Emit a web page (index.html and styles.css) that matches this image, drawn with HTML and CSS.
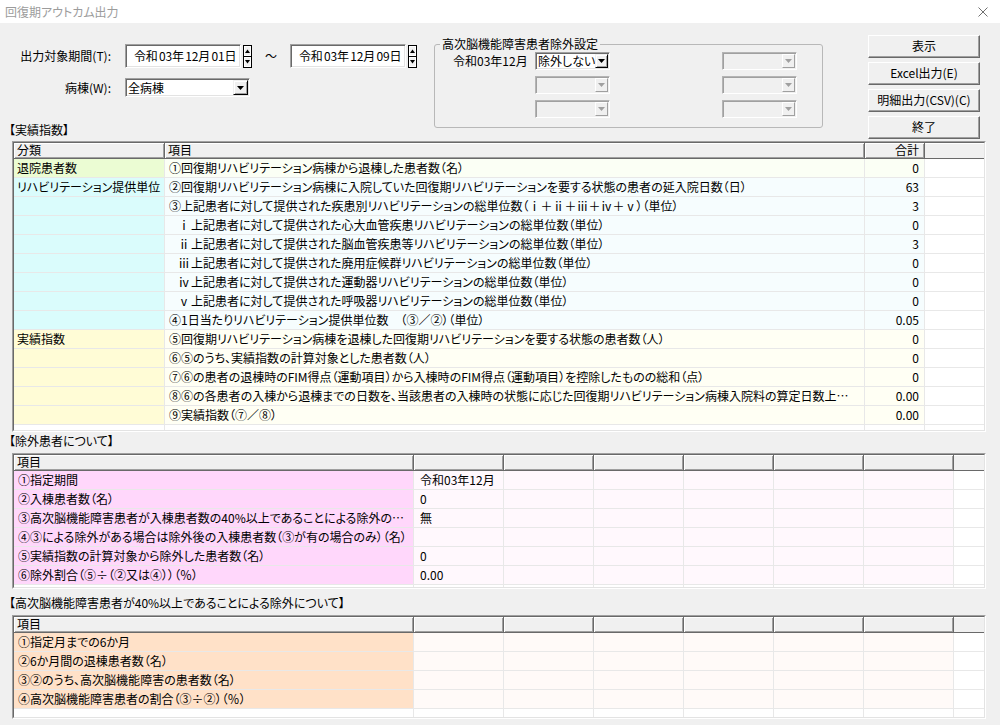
FILE: index.html
```html
<!DOCTYPE html>
<html lang="ja">
<head>
<meta charset="utf-8">
<title>回復期アウトカム出力</title>
<link rel="stylesheet" href="styles.css">
</head>
<body>
<div class="titlebar">
  <span class="title">回復期アウトカム出力</span>
  <svg class="close" width="10" height="10" viewBox="0 0 10 10"><path d="M0.5 0.5L9.5 9.5M9.5 0.5L0.5 9.5" stroke="#707070" stroke-width="1" fill="none"/></svg>
</div>

<div class="top">
  <div class="left">
    <div class="frow r1">
      <span class="lbl">出力対象期間(T):</span>
      <div class="date sunken">令和 03年 12月 01日</div>
      <svg class="spin" width="9" height="23" viewBox="0 0 9 23"><rect x="0.5" y="0.5" width="8" height="22" fill="#f0f0f0" stroke="#000"/><rect x="1.5" y="1.5" width="6" height="9" fill="none" stroke="#fff"/><rect x="1.5" y="12.5" width="6" height="9" fill="none" stroke="#fff"/><line x1="0" y1="11.5" x2="9" y2="11.5" stroke="#000"/><polygon points="2,8 7,8 4.5,4.5" fill="#000"/><polygon points="2,15 7,15 4.5,18.5" fill="#000"/></svg>
      <span class="tilde">～</span>
      <div class="date sunken">令和 03年 12月 09日</div>
      <svg class="spin" width="9" height="23" viewBox="0 0 9 23"><rect x="0.5" y="0.5" width="8" height="22" fill="#f0f0f0" stroke="#000"/><rect x="1.5" y="1.5" width="6" height="9" fill="none" stroke="#fff"/><rect x="1.5" y="12.5" width="6" height="9" fill="none" stroke="#fff"/><line x1="0" y1="11.5" x2="9" y2="11.5" stroke="#000"/><polygon points="2,8 7,8 4.5,4.5" fill="#000"/><polygon points="2,15 7,15 4.5,18.5" fill="#000"/></svg>
    </div>
    <div class="frow r2">
      <span class="lbl">病棟(W):</span>
      <div class="sel sunken ward"><span class="seltext">全病棟</span><span class="arrow"><svg width="7" height="4" viewBox="0 0 7 4"><polygon points="0,0 7,0 3.5,4" fill="#000"/></svg></span></div>
    </div>
  </div>

  <fieldset class="group">
    <legend>高次脳機能障害患者除外設定</legend>
    <div class="gb-grid">
      <span class="gb-lbl">令和03年12月</span>
      <div class="sel sunken small"><span class="seltext">除外しない</span><span class="arrow"><svg width="7" height="4" viewBox="0 0 7 4"><polygon points="0,0 7,0 3.5,4" fill="#000"/></svg></span></div>
      <span></span>
      <div class="sel sunken small dis"><span class="seltext"></span><span class="arrow"><svg width="7" height="4" viewBox="0 0 7 4"><polygon points="0,0 7,0 3.5,4" fill="#a0a0a0"/></svg></span></div>
      <span></span>
      <div class="sel sunken small dis"><span class="seltext"></span><span class="arrow"><svg width="7" height="4" viewBox="0 0 7 4"><polygon points="0,0 7,0 3.5,4" fill="#a0a0a0"/></svg></span></div>
      <span></span>
      <div class="sel sunken small dis"><span class="seltext"></span><span class="arrow"><svg width="7" height="4" viewBox="0 0 7 4"><polygon points="0,0 7,0 3.5,4" fill="#a0a0a0"/></svg></span></div>
      <span></span>
      <div class="sel sunken small dis"><span class="seltext"></span><span class="arrow"><svg width="7" height="4" viewBox="0 0 7 4"><polygon points="0,0 7,0 3.5,4" fill="#a0a0a0"/></svg></span></div>
      <span></span>
      <div class="sel sunken small dis"><span class="seltext"></span><span class="arrow"><svg width="7" height="4" viewBox="0 0 7 4"><polygon points="0,0 7,0 3.5,4" fill="#a0a0a0"/></svg></span></div>
    </div>
  </fieldset>

  <div class="btns">
    <div class="btn">表示</div>
    <div class="btn">Excel出力(E)</div>
    <div class="btn">明細出力(CSV)(C)</div>
    <div class="btn">終了</div>
  </div>
</div>

<div class="seclabel s1">【実績指数】</div>
<div class="grid g1">
  <div class="inner">
    <div class="row head">
      <div class="hc">分類</div><div class="hc">項目</div><div class="hc num">合計</div><div class="hc fill"></div>
    </div>
    <div class="row green">
      <div class="c cat">退院患者数</div><div class="c item">①回復期リハビリテーション病棟から退棟した患者数（名）</div><div class="c item num">0</div><div class="c blank"></div>
    </div>
    <div class="row cyan">
      <div class="c cat">リハビリテーション提供単位</div><div class="c item">②回復期リハビリテーション病棟に入院していた回復期リハビリテーションを要する状態の患者の延入院日数（日）</div><div class="c item num">63</div><div class="c blank"></div>
    </div>
    <div class="row cyan">
      <div class="c cat"></div><div class="c item">③上記患者に対して提供された疾患別リハビリテーションの総単位数（<span class="rs">ⅰ</span><span class="rs">＋</span><span class="rs">ⅱ</span><span class="rs">＋</span><span class="rs">ⅲ</span><span class="rs">＋</span><span class="rs">ⅳ</span><span class="rs">＋</span><span class="rs">ⅴ</span>）（単位）</div><div class="c item num">3</div><div class="c blank"></div>
    </div>
    <div class="row cyan">
      <div class="c cat"></div><div class="c item"><span class="rm">ⅰ</span>上記患者に対して提供された心大血管疾患リハビリテーションの総単位数（単位）</div><div class="c item num">0</div><div class="c blank"></div>
    </div>
    <div class="row cyan">
      <div class="c cat"></div><div class="c item"><span class="rm">ⅱ</span>上記患者に対して提供された脳血管疾患等リハビリテーションの総単位数（単位）</div><div class="c item num">3</div><div class="c blank"></div>
    </div>
    <div class="row cyan">
      <div class="c cat"></div><div class="c item"><span class="rm">ⅲ</span>上記患者に対して提供された廃用症候群リハビリテーションの総単位数（単位）</div><div class="c item num">0</div><div class="c blank"></div>
    </div>
    <div class="row cyan">
      <div class="c cat"></div><div class="c item"><span class="rm">ⅳ</span>上記患者に対して提供された運動器リハビリテーションの総単位数（単位）</div><div class="c item num">0</div><div class="c blank"></div>
    </div>
    <div class="row cyan">
      <div class="c cat"></div><div class="c item"><span class="rm">ⅴ</span>上記患者に対して提供された呼吸器リハビリテーションの総単位数（単位）</div><div class="c item num">0</div><div class="c blank"></div>
    </div>
    <div class="row cyan">
      <div class="c cat"></div><div class="c item">④1日当たりリハビリテーション提供単位数　（③／②）（単位）</div><div class="c item num">0.05</div><div class="c blank"></div>
    </div>
    <div class="row yellow">
      <div class="c cat">実績指数</div><div class="c item">⑤回復期リハビリテーション病棟を退棟した回復期リハビリテーションを要する状態の患者数（人）</div><div class="c item num">0</div><div class="c blank"></div>
    </div>
    <div class="row yellow">
      <div class="c cat"></div><div class="c item">⑥⑤のうち、実績指数の計算対象とした患者数（人）</div><div class="c item num">0</div><div class="c blank"></div>
    </div>
    <div class="row yellow">
      <div class="c cat"></div><div class="c item">⑦⑥の患者の退棟時のFIM得点（運動項目）から入棟時のFIM得点（運動項目）を控除したものの総和（点）</div><div class="c item num">0</div><div class="c blank"></div>
    </div>
    <div class="row yellow">
      <div class="c cat"></div><div class="c item">⑧⑥の各患者の入棟から退棟までの日数を、当該患者の入棟時の状態に応じた回復期リハビリテーション病棟入院料の算定日数上限で除したものの総和（日）</div><div class="c item num">0.00</div><div class="c blank"></div>
    </div>
    <div class="row yellow">
      <div class="c cat"></div><div class="c item">⑨実績指数（⑦／⑧）</div><div class="c item num">0.00</div><div class="c blank"></div>
    </div>
    <div class="row empty">
      <div class="c"></div><div class="c"></div><div class="c"></div><div class="c blank"></div>
    </div>
  </div>
</div>

<div class="seclabel s2">【除外患者について】</div>
<div class="grid g2">
  <div class="inner">
    <div class="row head">
      <div class="hc">項目</div><div class="hc"></div><div class="hc"></div><div class="hc"></div><div class="hc"></div><div class="hc"></div><div class="hc"></div><div class="hc fill"></div>
    </div>
    <div class="row pink"><div class="c cat">①指定期間</div><div class="c val">令和03年12月</div><div class="c val"></div><div class="c val"></div><div class="c val"></div><div class="c val"></div><div class="c val"></div><div class="c blank"></div></div>
    <div class="row pink"><div class="c cat">②入棟患者数（名）</div><div class="c val">0</div><div class="c val"></div><div class="c val"></div><div class="c val"></div><div class="c val"></div><div class="c val"></div><div class="c blank"></div></div>
    <div class="row pink"><div class="c cat">③高次脳機能障害患者が入棟患者数の40%以上であることによる除外の有無</div><div class="c val">無</div><div class="c val"></div><div class="c val"></div><div class="c val"></div><div class="c val"></div><div class="c val"></div><div class="c blank"></div></div>
    <div class="row pink"><div class="c cat">④③による除外がある場合は除外後の入棟患者数（③が有の場合のみ）（名）</div><div class="c val"></div><div class="c val"></div><div class="c val"></div><div class="c val"></div><div class="c val"></div><div class="c val"></div><div class="c blank"></div></div>
    <div class="row pink"><div class="c cat">⑤実績指数の計算対象から除外した患者数（名）</div><div class="c val">0</div><div class="c val"></div><div class="c val"></div><div class="c val"></div><div class="c val"></div><div class="c val"></div><div class="c blank"></div></div>
    <div class="row pink"><div class="c cat">⑥除外割合（⑤÷（②又は④））（％）</div><div class="c val">0.00</div><div class="c val"></div><div class="c val"></div><div class="c val"></div><div class="c val"></div><div class="c val"></div><div class="c blank"></div></div>
    <div class="row empty"><div class="c"></div><div class="c"></div><div class="c"></div><div class="c"></div><div class="c"></div><div class="c"></div><div class="c"></div><div class="c blank"></div></div>
  </div>
</div>

<div class="seclabel s3">【高次脳機能障害患者が40%以上であることによる除外について】</div>
<div class="grid g3">
  <div class="inner">
    <div class="row head">
      <div class="hc">項目</div><div class="hc"></div><div class="hc"></div><div class="hc"></div><div class="hc"></div><div class="hc"></div><div class="hc"></div><div class="hc fill"></div>
    </div>
    <div class="row peach"><div class="c cat">①指定月までの6か月</div><div class="c val"></div><div class="c val"></div><div class="c val"></div><div class="c val"></div><div class="c val"></div><div class="c val"></div><div class="c blank"></div></div>
    <div class="row peach"><div class="c cat">②6か月間の退棟患者数（名）</div><div class="c val"></div><div class="c val"></div><div class="c val"></div><div class="c val"></div><div class="c val"></div><div class="c val"></div><div class="c blank"></div></div>
    <div class="row peach"><div class="c cat">③②のうち、高次脳機能障害の患者数（名）</div><div class="c val"></div><div class="c val"></div><div class="c val"></div><div class="c val"></div><div class="c val"></div><div class="c val"></div><div class="c blank"></div></div>
    <div class="row peach"><div class="c cat">④高次脳機能障害患者の割合（③÷②）（％）</div><div class="c val"></div><div class="c val"></div><div class="c val"></div><div class="c val"></div><div class="c val"></div><div class="c val"></div><div class="c blank"></div></div>
    <div class="row empty"><div class="c"></div><div class="c"></div><div class="c"></div><div class="c"></div><div class="c"></div><div class="c"></div><div class="c"></div><div class="c blank"></div></div>
  </div>
</div>
</body>
</html>
```
FILE: styles.css
```css
* { box-sizing: border-box; }
html, body { margin: 0; padding: 0; }
body {
  width: 1000px;
  height: 725px;
  overflow: hidden;
  background: #f0f0f0;
  color: #000;
  font-family: "Noto Sans CJK JP", "Noto Sans", sans-serif;
  font-size: 12px;
  line-height: 14px;
  font-feature-settings: "palt" 1;
}

/* title bar */
.titlebar {
  height: 23px;
  background: #fff;
  display: flex;
  align-items: center;
  justify-content: space-between;
  padding: 0 12px 0 5px;
}
.title { color: #9c9c9c; }
.close { display: block; }

/* top area */
.top {
  height: 118px;
  display: flex;
  align-items: flex-start;
}
.left {
  width: 434px;
  display: flex;
  flex-direction: column;
}
.frow { display: flex; align-items: center; }
.r1 { margin-top: 21px; height: 24px; }
.r2 { margin-top: 10px; height: 19px; }
.lbl {
  width: 111px;
  margin-right: 14px;
  text-align: right;
  white-space: nowrap;
}
.sunken {
  border: 1px solid;
  border-color: #a0a0a0 #fff #fff #a0a0a0;
  box-shadow: inset 1px 1px #696969, inset -1px -1px #e3e3e3;
}
.date {
  width: 116px;
  height: 24px;
  background: #fff;
  padding-left: 8px;
  line-height: 21px;
  white-space: nowrap;
  word-spacing: -1px;
  letter-spacing: -0.2px;
}
.spin { display: block; margin-left: 2px; }
.tilde { width: 38px; text-align: center; }

.sel {
  display: flex;
  align-items: center;
  background: #fff;
  padding: 1px;
}
.seltext { flex: 1; padding-left: 1px; white-space: nowrap; line-height: 14px; }
.ward { width: 125px; height: 19px; }
.small { width: 75px; height: 18px; }
.arrow {
  flex: none;
  width: 15px;
  height: 14px;
  background: #f0f0f0;
  border: 1px solid;
  border-color: #f0f0f0 #000 #000 #f0f0f0;
  box-shadow: inset 1px 1px #fff, inset -1px -1px #a0a0a0;
  display: flex;
  align-items: center;
  justify-content: center;
}
.small .arrow { width: 13px; }
.ward .arrow { height: 15px; }
.arrow svg { display: block; }
.sel.dis { background: #f0f0f0; border-color: #b4b4b4 #fff #fff #b4b4b4; box-shadow: inset 1px 1px #a0a0a0; }
.sel.dis .arrow {
  border-color: #fff #a0a0a0 #a0a0a0 #fff;
  box-shadow: none;
  background: #f0f0f0;
}

/* group box */
.group {
  margin: 14px 0 0 0;
  padding: 0;
  width: 389px;
  height: 91px;
  border: 1px solid #b8b8b8;
  border-radius: 3px;
  min-width: 0;
}
.group legend {
  margin-left: 5px;
  padding: 0 2px;
  line-height: 14px;
}
.gb-grid {
  margin: 1px 0 0 18px;
  display: grid;
  grid-template-columns: 82px 75px 112px 75px;
  grid-template-rows: 18px 18px 18px;
  row-gap: 6px;
  align-items: center;
}
.gb-lbl { white-space: nowrap; }

/* buttons */
.btns {
  margin: 12px 0 0 45px;
  display: flex;
  flex-direction: column;
  gap: 4px;
}
.btn {
  width: 112px;
  height: 23px;
  background: #f0f0f0;
  border: 1px solid;
  border-color: #fff #696969 #696969 #fff;
  box-shadow: inset -1px -1px #a0a0a0;
  text-align: center;
  line-height: 20px;
}

/* section labels */
.seclabel {
  height: 12px;
  line-height: 12px;
  padding-left: 9px;
  white-space: nowrap;
}
.s1 { margin-top: -17px; margin-bottom: 5px; }
.s2 { margin-top: 3px; margin-bottom: 6px; }
.s3 { margin-top: 8px; margin-bottom: 6px; }

/* grids */
.grid {
  margin-left: 12px;
  width: 974px;
  border: 1px solid;
  border-color: #a0a0a0 #fff #fff #a0a0a0;
  background: #fff;
}
.g1 { height: 291px; }
.g2 { height: 136px; }
.g3 { height: 104px; }
.inner {
  height: 100%;
  border: 1px solid;
  border-color: #696969 #e3e3e3 #e3e3e3 #696969;
  overflow: hidden;
  background: #fff;
}
.row { display: grid; height: 19px; }
.g1 .row { grid-template-columns: 151px 700px 60px 1fr; }
.g2 .row, .g3 .row { grid-template-columns: 400px repeat(6, 90px) 1fr; }
.row.head { height: 16px; }

.hc {
  height: 16px;
  background: #f0f0f0;
  border-right: 1px solid #696969;
  border-bottom: 1px solid #696969;
  box-shadow: inset 1px 1px #fff, inset -1px -1px #a0a0a0;
  padding-left: 3px;
  line-height: 14px;
  white-space: nowrap;
}
.hc.num { text-align: right; padding-right: 5px; }
.hc.fill { border-right: none; box-shadow: inset 0 1px #fff; }

.c {
  height: 19px;
  border-right: 1px solid #e8e8e8;
  border-bottom: 1px solid #e8e8e8;
  line-height: 18px;
  padding-left: 3px;
  white-space: nowrap;
  overflow: hidden;
  text-overflow: ellipsis;
}
.c.item { padding-left: 4px; padding-right: 8px; }
.c.num { text-align: right; padding-right: 5px; }
.c.val { padding-left: 6px; }
.c.blank { background: #fff; border-right: none; }
.g2 .c.cat, .g3 .c.cat { padding-left: 4px; padding-right: 4px; }

.rs { display: inline-block; width: 12px; text-align: center; font-feature-settings: normal; }
.rm { display: inline-block; width: 14px; margin-left: 8px; text-align: center; }

.green .cat { background: #ebfcd3; }
.green .item { background: #fbfff5; }
.cyan .cat { background: #dafcfc; }
.cyan .item { background: #f6fdfe; }
.yellow .cat { background: #fffcd6; }
.yellow .item { background: #fffff4; }
.pink .cat { background: #ffd7fb; }
.pink .val { background: #fff8fd; }
.peach .cat { background: #ffe1c8; }
.peach .val { background: #fffaf8; }
.empty .c { background: #fff; }
```
